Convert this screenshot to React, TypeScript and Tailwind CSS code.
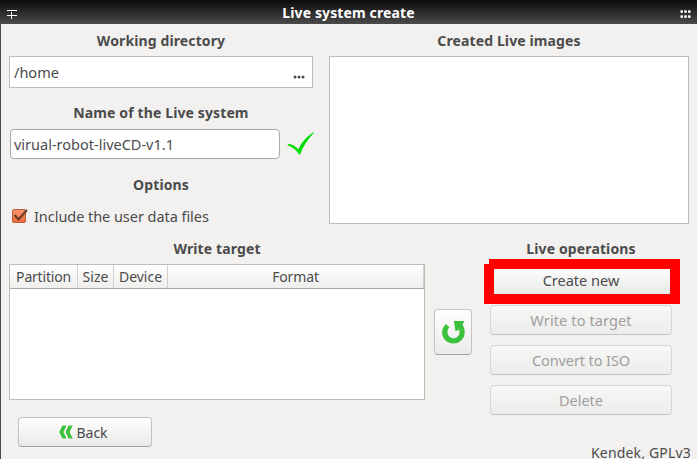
import type { ReactNode } from 'react';

function Heading({ children, className = '' }: { children: ReactNode; className?: string }) {
  return (
    <h2 className={`flex h-[30px] shrink-0 items-center justify-center whitespace-nowrap pb-[2px] text-[14px] font-bold tracking-[0.12px] ${className}`}>
      <span>{children}</span>
    </h2>
  );
}

function OperationButton({ children, disabled = false, className = 'tracking-normal' }: { children: ReactNode; disabled?: boolean; className?: string }) {
  return (
    <button
      disabled={disabled}
      className={`flex h-[30px] w-[182px] items-center justify-center whitespace-nowrap rounded-[4px] border pt-[2px] text-[14.5px] ${
        disabled
          ? 'border-[#d6d5d3] border-b-[#c3c2c0] bg-linear-to-b from-[#f7f7f6] to-[#ececeb] text-[#a09f9e]'
          : 'border-[#c3c2c0] bg-linear-to-b from-white to-[#e9e9e8]'
      } ${className}`}
    >
      {children}
    </button>
  );
}

function TitleBar() {
  return (
    <header className="flex h-6 shrink-0 items-center justify-between bg-linear-to-b from-[#0d0d0d] to-[#4b4b4b] pr-[6px] pl-[7px] text-white">
      <svg width="10" height="10" viewBox="0 0 10 10" className="mt-[6px]" shapeRendering="crispEdges">
        <path d="M0 .5H10M0 5.500H10M4.500 2V9" stroke="white" fill="none" strokeWidth="1" />
      </svg>
      <h1 className="pt-[2px] text-[14px] leading-[22px] font-bold tracking-[0.12px] whitespace-nowrap">Live system create</h1>
      <svg width="11" height="9" viewBox="0 0 11 9" className="mt-[4px]" fill="white">
        <rect x="0.4" y="0.3" width="2.6" height="2.6" rx=".8" />
        <rect x="4.2" y="0.3" width="2.6" height="2.6" rx=".8" />
        <rect x="8" y="0.3" width="2.6" height="2.6" rx=".8" />
        <rect x="0.4" y="5.3" width="2.6" height="2.6" rx=".8" />
        <rect x="4.2" y="5.3" width="2.6" height="2.6" rx=".8" />
        <rect x="8" y="5.3" width="2.6" height="2.6" rx=".8" />
      </svg>
    </header>
  );
}

function Settings() {
  return (
    <section className="flex w-[304px] flex-col">
      <Heading>Working directory</Heading>
      <div className="flex h-8 items-center justify-between border border-[#bfbdb9] bg-white pr-[7px] pl-1 text-[14.5px]">
        <span className="pt-[2px]">/home</span>
        <svg width="12" height="4" viewBox="0 0 12 4" className="mt-[9px]" fill="#4b4b4b">
          <circle cx="2" cy="2" r="1.5" />
          <circle cx="6" cy="2" r="1.5" />
          <circle cx="10" cy="2" r="1.5" />
        </svg>
      </div>
      <Heading className="mt-[10px]">Name of the Live system</Heading>
      <div className="mt-[1px] flex h-[30px] items-center">
        <div className="ml-[1px] flex h-[30px] w-[270px] shrink-0 items-center rounded-[4px] border border-[#aaa8a5] bg-white pt-[2px] pl-[3px] text-[14.5px] whitespace-nowrap">
          virual-robot-liveCD-v1.1
        </div>
        <svg width="27" height="24" viewBox="0 0 27 24" className="ml-[7px] shrink-0" fill="#00dc00">
          <path d="M0.8 11.800C4.800 12.200 8.800 14.300 11.400 17.200C15.200 9.500 20 4.200 26.800 0L27 .8C21.500 6.500 16.500 13.500 12.800 23.200C9.800 18.600 6 15.400 .7 13.200Z" />
        </svg>
      </div>
      <Heading className="mt-[11px]">Options</Heading>
      <label className="flex h-[34px] items-center pb-[2px] text-[14.5px] tracking-[-0.05px] whitespace-nowrap">
        <svg width="17" height="16" viewBox="0 0 17 16" className="ml-[2px]">
          <defs>
            <linearGradient id="checkFill" x1="0" y1="0" x2="0" y2="1">
              <stop stopColor="#f8956d" />
              <stop offset="1" stopColor="#ee6b3a" />
            </linearGradient>
          </defs>
          <rect x="1.500" y="1.500" width="13" height="13" rx="1.500" fill="url(#checkFill)" stroke="#b8603f" />
          <path d="M3.500 7L7.500 11.500L16 2" fill="none" stroke="#6b3a28" strokeWidth="2" />
        </svg>
        <span className="ml-[6px] pt-[2px]">Include the user data files</span>
      </label>
    </section>
  );
}

function TargetTable() {
  const cell = 'border-r border-[#d1d0ce] text-center font-normal';
  return (
    <section className="w-[416px]">
      <Heading>Write target</Heading>
      <div className="h-[136px] border border-[#bfbdb5] bg-white text-[14px]">
        <div className="flex h-6 border-b border-[#aaa9a7] bg-linear-to-b from-white to-[#efeeed] leading-[23px] whitespace-nowrap">
          <div className={`w-[68px] tracking-[-0.2px] ${cell}`}>Partition</div>
          <div className={`w-9 ${cell}`}>Size</div>
          <div className={`w-[54px] ${cell}`}>Device</div>
          <div className={`flex-1 tracking-[-0.15px] ${cell}`}>Format</div>
        </div>
      </div>
    </section>
  );
}

export default function App() {
  return (
    <main className="flex h-[459px] w-[697px] flex-col overflow-hidden bg-[#f2f1f0] font-['Noto_Sans','Open_Sans',sans-serif] text-[#4b4b4b]">
      <TitleBar />
      <div className="flex min-h-0 flex-1 flex-col border-l border-[#4b4b4b] pt-[2px] pl-2">
        <div className="flex h-[208px] shrink-0 gap-4">
          <Settings />
          <section className="w-[360px]">
            <Heading>Created Live images</Heading>
            <div className="h-[168px] border border-[#bfbdb9] bg-white" />
          </section>
        </div>
        <div className="flex h-[183px] shrink-0">
          <TargetTable />
          <button className="mt-[75px] ml-[9px] flex h-[46px] w-[38px] items-center justify-center rounded-[4px] border border-[#c5c4c2] border-b-[#a4a3a1] bg-linear-to-b from-white to-[#ebebea]">
            <svg width="26" height="26" viewBox="0 0 26 26" className="shrink-0" fill="#3bc13b">
              <path d="M5.800 5L9.500 8.200C6.800 11 7 15 9.300 17.400C11.700 19.900 15.500 19.900 17.800 17.500C19.700 15.500 20 12.800 18.800 10.400L15.500 12.500L14.300 4.800L14 2H24.500L22.400 5.700C25.600 9.900 25.600 16.800 21.700 21C17.500 25.600 9.800 25.700 5.400 21.200C1 16.800 .8 10 5.800 5Z" />
            </svg>
          </button>
          <section className="ml-[18px] w-[182px]">
            <Heading>Live operations</Heading>
            <div className="mt-[1px] flex flex-col gap-[10px]">
              <div className="relative">
                <OperationButton>Create new</OperationButton>
                <div className="absolute -top-[1px] -left-[6px] h-[40px] w-[196px] border-x-10 border-b-10 border-[#ff0000]" />
                <div className="absolute -top-[6px] -left-[1px] h-[10px] w-[191px] bg-[#ff0000]" />
              </div>
              <OperationButton disabled className="tracking-[0.12px]">Write to target</OperationButton>
              <OperationButton disabled className="tracking-[-0.1px]">Convert to ISO</OperationButton>
              <OperationButton disabled>Delete</OperationButton>
            </div>
          </section>
        </div>
        <footer className="flex h-[42px] shrink-0 justify-between pr-[6px] pl-[9px]">
          <button className="flex h-[30px] w-[134px] items-center justify-center rounded-[4px] border border-[#c3c2c0] border-b-[#a4a3a1] bg-linear-to-b from-white to-[#e9e9e8] pr-[3px] text-[14px]">
            <svg width="14" height="14" viewBox="0 0 14 14" fill="#3bc13b" className="mr-[3px]">
              <path d="M3.500 .5H7.500L4.400 7L7.500 13.500H3.500L.3 7ZM9.700 .5H13.700L10.600 7L13.700 13.500H9.700L6.500 7Z" />
            </svg>
            <span>Back</span>
          </button>
          <span className="mt-[29px] text-[14px] leading-[14px] tracking-[0.18px] whitespace-nowrap">Kendek, GPLv3</span>
        </footer>
      </div>
    </main>
  );
}
